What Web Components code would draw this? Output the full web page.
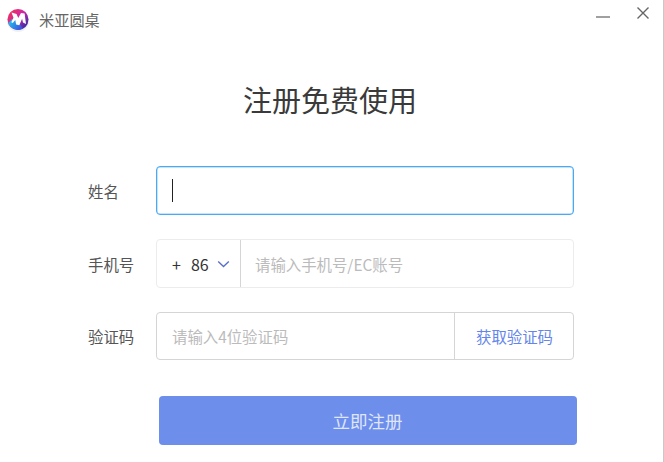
<!DOCTYPE html>
<html lang="zh">
<head>
<meta charset="utf-8">
<title>米亚圆桌</title>
<style>
  html, body { margin: 0; height: 100%; background: #fff; }
  body { font-family: "Noto Sans CJK SC", "Noto Sans", sans-serif; overflow: hidden; }
</style>
</head>
<body>
<app-window>
  <title-bar slot="top">米亚圆桌</title-bar>
  <signup-form></signup-form>
</app-window>

<script>
class AppWindow extends HTMLElement {
  constructor() {
    super();
    this.attachShadow({ mode: "open" }).innerHTML = `
      <style>
        :host {
          display: flex;
          flex-direction: column;
          box-sizing: border-box;
          width: 664px;
          height: 462px;
          border-right: 1px solid #c8c8c8;
          background: #fff;
        }
      </style>
      <slot name="top"></slot>
      <slot></slot>
    `;
  }
}

class TitleBar extends HTMLElement {
  constructor() {
    super();
    this.attachShadow({ mode: "open" }).innerHTML = `
      <style>
        :host {
          display: flex;
          align-items: center;
          height: 40px;
          padding-left: 5px;
          color: #666;
          font-size: 15.2px;
        }
        .logo { width: 26px; height: 26px; margin: -2px 8px 0 0; flex: none; }
        .name { flex: 1; margin-top: -2px; }
        .ctrl { display: block; flex: none; }
        .min { margin-right: 26px; margin-top: -6px; }
        .close { margin-right: 13px; margin-top: -14px; }
      </style>
      <svg class="logo" viewBox="0 0 26 26">
        <defs>
          <linearGradient id="a" x1="0.1" y1="0" x2="1" y2="0.8">
            <stop offset="0" stop-color="#f4304a"/>
            <stop offset=".5" stop-color="#d028a8"/>
            <stop offset="1" stop-color="#2a2aa0"/>
          </linearGradient>
          <linearGradient id="b" x1="0" y1="0" x2="1" y2="0.4">
            <stop offset="0" stop-color="#1fd0ee"/>
            <stop offset="1" stop-color="#3b55e0"/>
          </linearGradient>
          <filter id="s" x="-30%" y="-30%" width="160%" height="160%"><feGaussianBlur stdDeviation="0.3"/></filter>
        </defs>
        <circle cx="13" cy="15" r="11" fill="#f0f1f4"/>
        <circle cx="13" cy="13.5" r="10.5" fill="url(#a)"/>
        <path d="M3.2 17.3a10.5 10.5 0 0 0 15 5.2L12 14.5 7 13z" fill="url(#b)"/>
        <path d="M6.5 6.5l5 1.6 1.8 4 2.7-5 3.6.3 1.4 10.6-3-1.4-.9-3.8-2.8 6.4-3.2-.8-.8-4.4-2.6 3-1.4-.8 2.2-4.4z" fill="#fff" filter="url(#s)"/>
      </svg>
      <span class="name"><slot></slot></span>
      <svg class="ctrl min" width="14" height="2" viewBox="0 0 14 2"><path d="M0 1h14" stroke="#777" stroke-width="1.4"/></svg>
      <svg class="ctrl close" width="14" height="14" viewBox="0 0 14 14"><path d="M1.5 1.5l11 11M12.5 1.5l-11 11" stroke="#666" stroke-width="1.4" fill="none"/></svg>
    `;
  }
}

class FormRow extends HTMLElement {
  constructor() {
    super();
    this.attachShadow({ mode: "open" }).innerHTML = `
      <style>
        :host {
          display: flex;
          align-items: center;
          height: 49px;
        }
        .label {
          width: 68px;
          flex: none;
          color: #555;
          font-size: 15.4px;
        }
        .field {
          display: flex;
          align-items: stretch;
          box-sizing: border-box;
          width: 418px;
          height: 100%;
          border: 1px solid var(--line, #d5d5d5);
          border-radius: 4px;
          font-size: 15.4px;
        }
        :host([active]) .field { --line: #4aa8f5; box-shadow: inset 0 0 0 0.5px #8cc8f8; }
        :host([faint]) .field { --line: #ececec; }
      </style>
      <span class="label"></span>
      <div class="field"><slot></slot></div>
    `;
  }
  connectedCallback() {
    this.shadowRoot.querySelector(".label").textContent = this.getAttribute("label");
  }
}

class SignupForm extends HTMLElement {
  constructor() {
    super();
    this.attachShadow({ mode: "open" }).innerHTML = `
      <style>
        :host {
          display: flex;
          flex-direction: column;
          padding: 0 0 0 88px;
        }
        h1 {
          margin: 36px 0 0 0;
          width: 484px;
          height: 47px;
          line-height: 47px;
          text-align: center;
          color: #3a3a3a;
          font-size: 29px;
          font-weight: 400;
        }
        .rows { display: flex; flex-direction: column; gap: 24px; margin-top: 43px; }
        .rows form-row:last-child { height: 48px; }
        .ph { flex: 1; display: flex; align-items: center; padding-left: 15px; color: #bbb; font-size: 15.4px; }
        .phone { padding-left: 14px; }
        .caret { width: 1px; height: 23px; margin: auto 0 auto 15px; background: #222; }
        .code {
          display: flex; align-items: center; flex: none; box-sizing: border-box;
          width: 84px; padding-left: 15px; border-right: 1px solid #d5d5d5; color: #333; font-size: 16px;
        }
        .code svg { margin-left: 8px; }
        .code span + span { margin-left: 10px; }
        .get {
          display: flex; align-items: center; flex: none; box-sizing: border-box;
          width: 119px; padding-left: 21px; border-left: 1px solid #d5d5d5; color: #6485ea; font-size: 15.4px;
        }
        button {
          display: block;
          box-sizing: border-box;
          width: 418px;
          height: 49px;
          margin: 36px 0 0 70.5px;
          border: 0;
          border-radius: 4px;
          background: #6e8eec;
          color: #dfe6fb;
          font: inherit;
          font-size: 17.5px;
        }
      </style>
      <h1>注册免费使用</h1>
      <div class="rows">
        <form-row label="姓名" active><div class="caret"></div></form-row>
        <form-row label="手机号" faint>
          <div class="code"><span>+</span><span>86</span>
            <svg width="13" height="8" viewBox="0 0 13 8"><path d="M1.2 1.5l5.3 5 5.3-5" fill="none" stroke="#5a70c8" stroke-width="1.4"/></svg>
          </div>
          <div class="ph phone">请输入手机号/EC账号</div>
        </form-row>
        <form-row label="验证码">
          <div class="ph">请输入4位验证码</div>
          <div class="get">获取验证码</div>
        </form-row>
      </div>
      <button type="button">立即注册</button>
    `;
  }
}

customElements.define("app-window", AppWindow);
customElements.define("title-bar", TitleBar);
customElements.define("form-row", FormRow);
customElements.define("signup-form", SignupForm);
</script>
</body>
</html>
